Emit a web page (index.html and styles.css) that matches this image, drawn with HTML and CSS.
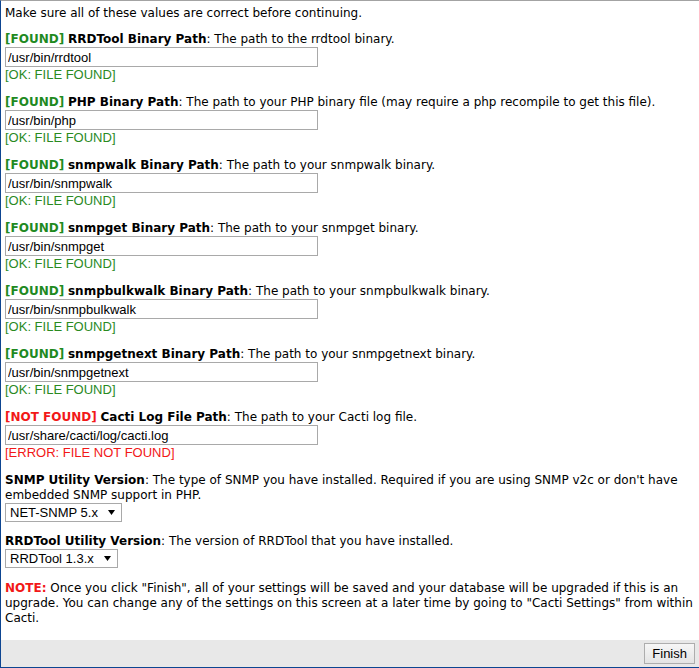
FILE: index.html
```html
<!DOCTYPE html>
<html lang="en">

<head>
  <meta charset="UTF-8">
  <meta name="viewport" content="width=device-width, initial-scale=1.0">
  <title>Cacti Installation</title>
  <link rel="stylesheet" href="styles.css">
</head>

<body>
  <div class="box">
    <div class="content">
      <p class="intro">Make sure all of these values are correct before continuing.</p>

      <!-- paths -->
      <div class="field">
        <div class="label"><b class="found">[FOUND]</b> <b>RRDTool Binary Path</b>: The path to the rrdtool binary.</div>
        <input class="path" type="text" value="/usr/bin/rrdtool">
        <div class="ok">[OK: FILE FOUND]</div>
      </div>
      <div class="field">
        <div class="label"><b class="found">[FOUND]</b> <b>PHP Binary Path</b>: The path to your PHP binary file (may require a php recompile to get this file).</div>
        <input class="path" type="text" value="/usr/bin/php">
        <div class="ok">[OK: FILE FOUND]</div>
      </div>
      <div class="field">
        <div class="label"><b class="found">[FOUND]</b> <b>snmpwalk Binary Path</b>: The path to your snmpwalk binary.</div>
        <input class="path" type="text" value="/usr/bin/snmpwalk">
        <div class="ok">[OK: FILE FOUND]</div>
      </div>
      <div class="field">
        <div class="label"><b class="found">[FOUND]</b> <b>snmpget Binary Path</b>: The path to your snmpget binary.</div>
        <input class="path" type="text" value="/usr/bin/snmpget">
        <div class="ok">[OK: FILE FOUND]</div>
      </div>
      <div class="field">
        <div class="label"><b class="found">[FOUND]</b> <b>snmpbulkwalk Binary Path</b>: The path to your snmpbulkwalk binary.</div>
        <input class="path" type="text" value="/usr/bin/snmpbulkwalk">
        <div class="ok">[OK: FILE FOUND]</div>
      </div>
      <div class="field">
        <div class="label"><b class="found">[FOUND]</b> <b>snmpgetnext Binary Path</b>: The path to your snmpgetnext binary.</div>
        <input class="path" type="text" value="/usr/bin/snmpgetnext">
        <div class="ok">[OK: FILE FOUND]</div>
      </div>
      <div class="field">
        <div class="label"><b class="missing">[NOT FOUND]</b> <b>Cacti Log File Path</b>: The path to your Cacti log file.</div>
        <input class="path" type="text" value="/usr/share/cacti/log/cacti.log">
        <div class="error">[ERROR: FILE NOT FOUND]</div>
      </div>

      <!-- versions -->
      <div class="field">
        <div class="label"><b>SNMP Utility Version</b>: The type of SNMP you have installed. Required if you are using SNMP v2c or don't have embedded SNMP support in PHP.</div>
        <div class="select">
          <span>NET-SNMP 5.x</span>
          <svg width="7" height="5" viewBox="0 0 7 5"><path d="M0 0H7L3.5 5Z" fill="#000" /></svg>
        </div>
      </div>
      <div class="field">
        <div class="label"><b>RRDTool Utility Version</b>: The version of RRDTool that you have installed.</div>
        <div class="select">
          <span>RRDTool 1.3.x</span>
          <svg width="7" height="5" viewBox="0 0 7 5"><path d="M0 0H7L3.5 5Z" fill="#000" /></svg>
        </div>
      </div>

      <p class="note"><b>NOTE:</b> Once you click "Finish", all of your settings will be saved and your database will be upgraded if this is an upgrade. You can change any of the settings on this screen at a later time by going to "Cacti Settings" from within Cacti.</p>
    </div>

    <div class="footer">
      <button class="finish">Finish</button>
    </div>
  </div>
</body>

</html>
```

FILE: styles.css
```css
* {
  margin: 0;
  padding: 0;
  box-sizing: border-box;
}

body {
  font-family: "DejaVu Sans", Verdana, sans-serif;
  font-size: 12px;
  color: #000;
  background-color: #fff;
}

.box {
  height: 668px;
  border-top: 1px solid #a3a3a3;
  border-left: 1px solid #0d4591;
  border-bottom: 1px solid #0d4591;
  display: flex;
  flex-direction: column;
}

.content {
  flex: 1;
  padding: 5px 0 0 4px;
}

.intro {
  line-height: 15px;
  margin-bottom: 9px;
}

.field {
  margin-bottom: 10px;
}

.label {
  padding-top: 2px;
  line-height: 15px;
}

.found {
  color: #1f8a1f;
}

.missing {
  color: #f21818;
}

.path {
  display: block;
  width: 313px;
  height: 20px;
  padding: 0 2px;
  border: 1px solid #a9a9a9;
  font-family: "Liberation Sans", Arial, sans-serif;
  font-size: 13px;
  color: #000;
}

.ok,
.error {
  font-family: "Liberation Sans", Arial, sans-serif;
  font-size: 13px;
  line-height: 16px;
}

.ok {
  color: #2a8a1f;
}

.error {
  color: #f21818;
}

.select {
  display: inline-flex;
  align-items: center;
  gap: 10px;
  height: 19px;
  padding: 0 6px 0 4px;
  border: 1px solid #a9a9a9;
  font-family: "Liberation Sans", Arial, sans-serif;
  font-size: 13px;
}

.note {
  padding-top: 3px;
  line-height: 15px;
}

.note b {
  color: #f21818;
}

.footer {
  height: 27px;
  background-color: #e8e8e8;
  display: flex;
  justify-content: flex-end;
  align-items: center;
  padding-right: 4px;
}

.finish {
  height: 21px;
  padding: 0 7px;
  border: 1px solid #adadad;
  background: linear-gradient(#f6f6f6, #e4e4e4);
  font-family: "Liberation Sans", Arial, sans-serif;
  font-size: 13px;
  color: #000;
}
```
